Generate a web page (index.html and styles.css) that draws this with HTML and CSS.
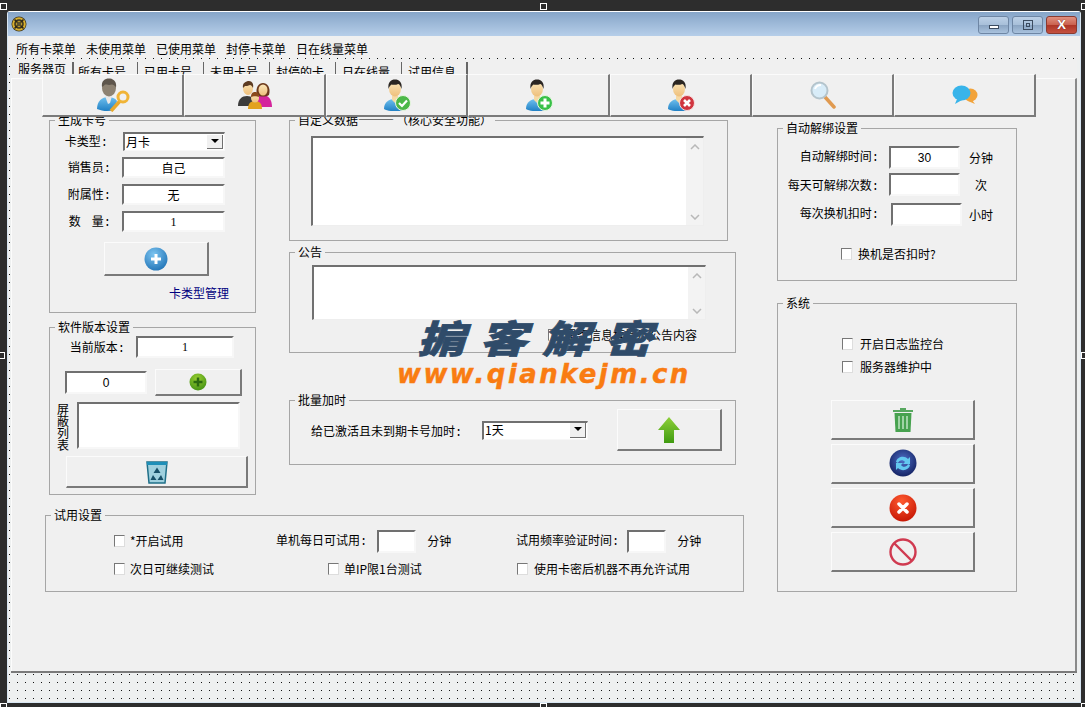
FILE: index.html
```html
<!DOCTYPE html>
<html lang="zh-CN">
<head>
<meta charset="utf-8">
<title>服务器页</title>
<link rel="stylesheet" href="styles.css">
</head>
<body>
<svg class="defs" width="0" height="0">
  <defs>
    <linearGradient id="gBlue" x1="0" y1="0" x2="0" y2="1"><stop offset="0" stop-color="#6fc0ee"/><stop offset="1" stop-color="#1f7fc4"/></linearGradient>
    <linearGradient id="gSkin" x1="0" y1="0" x2="0" y2="1"><stop offset="0" stop-color="#fbe6b8"/><stop offset="1" stop-color="#eebf7c"/></linearGradient>
    <radialGradient id="gBall" cx=".4" cy=".3" r=".8"><stop offset="0" stop-color="#7cc4f0"/><stop offset="1" stop-color="#1c6fb3"/></radialGradient>
    <radialGradient id="gGreen" cx=".45" cy=".3" r=".8"><stop offset="0" stop-color="#9ad030"/><stop offset="1" stop-color="#3a8a12"/></radialGradient>
    <radialGradient id="gRed" cx=".45" cy=".25" r=".85"><stop offset="0" stop-color="#ff5a30"/><stop offset="1" stop-color="#c01000"/></radialGradient>
    <radialGradient id="gNavy" cx=".5" cy=".4" r=".65"><stop offset="0" stop-color="#4f6fc8"/><stop offset="1" stop-color="#101d5c"/></radialGradient>
    <linearGradient id="gArrow" x1="0" y1="0" x2="0" y2="1"><stop offset="0" stop-color="#8ed03a"/><stop offset="1" stop-color="#3f9a10"/></linearGradient>
    <symbol id="person" viewBox="0 0 28 34">
      <path d="M1 30c0-7 5-10 11-10s11 3 11 10c-5 3-17 3-22 0z" fill="url(#gBlue)"/>
      <path d="M9 17h6v4l-3 3-3-3z" fill="#f6d9a4"/>
      <ellipse cx="12" cy="10" rx="6" ry="7.500" fill="url(#gSkin)"/>
      <path d="M5.500 10C4.500 3 8 .5 12 .5s7.500 2.500 6.500 9.500c-1-3-2-4.500-3-5-2 1-6 1-7 .5-1 1-2.500 2-3 4.500z" fill="#2b2622"/>
    </symbol>
  </defs>
</svg>
<div class="desk">
  <div class="window">
    <header class="titlebar">
      <svg class="app-icon" viewBox="0 0 16 16" width="16" height="16">
        <circle cx="8" cy="8" r="7.500" fill="#3a3320"/>
        <circle cx="8" cy="8" r="5.800" fill="none" stroke="#d8b030" stroke-width="2"/>
        <circle cx="8" cy="8" r="2.800" fill="#5c5230" stroke="#c8a428"/>
        <path d="M3.500 3.500l3 3M12.500 3.500l-3 3M3.500 12.500l3-3M12.500 12.500l-3-3" stroke="#2c2616" stroke-width="1.500"/>
      </svg>
      <div class="win-buttons">
        <div class="win-btn"><span class="glyph-min"></span></div>
        <div class="win-btn"><span class="glyph-max"></span></div>
        <div class="win-btn win-close"><span class="glyph-close">X</span></div>
      </div>
    </header>
    <div class="designer">
      <nav class="menu">
        <span>所有卡菜单</span><span>未使用菜单</span><span>已使用菜单</span><span>封停卡菜单</span><span>日在线量菜单</span>
      </nav>
      <div class="client">
        <div class="tabs">
          <span class="tab tab-on">服务器页</span><span class="tab">所有卡号</span><span class="tab">已用卡号</span><span class="tab">未用卡号</span><span class="tab">封停的卡</span><span class="tab">日在线量</span><span class="tab">试用信息</span>
        </div>
        <div class="toolbar">
          <div class="btn tool">
            <svg viewBox="0 0 34 34" width="34" height="34">
              <path d="M1 31c0-8 5-12 11-12 4 0 7 1 9 4l-3 9c-6 2-12 1-17-1z" fill="url(#gBlue)"/>
              <path d="M9 18h7l-2 7-2 1z" fill="#e8e8e8"/>
              <ellipse cx="13" cy="10" rx="7" ry="8.500" fill="#8d8272"/>
              <path d="M6 9C5 2 10 0 14 .5s7 4 6 9c-1-2-3-3-4-3-3 1-6 0-7 0-1 1-2 2-3 2.500z" fill="#5e564c"/>
              <path d="M15 33l9-10" stroke="#e9a92c" stroke-width="3.500"/>
              <circle cx="27" cy="19" r="5" fill="none" stroke="#f0b437" stroke-width="3"/>
            </svg>
          </div>
          <div class="btn tool">
            <svg viewBox="0 0 34 28" width="34" height="28">
              <path d="M0 25c0-7 4-10 9-10s8 3 8 10z" fill="#3c3c3c"/>
              <ellipse cx="10" cy="7.500" rx="5" ry="6.500" fill="url(#gSkin)"/>
              <path d="M5 7C4 2 8 0 11 0s5 3 4 7c-1-2-2-3-3-3-2 1-4 1-5 1z" fill="#5d3b22"/>
              <path d="M17 26c0-8 3-12 8-12s9 4 9 12z" fill="#d4259c"/>
              <path d="M19 14c-2-8 2-12 6-12s8 4 6 12c-3 2-9 2-12 0z" fill="#6d3a1c"/>
              <ellipse cx="25" cy="9" rx="4.500" ry="5.500" fill="url(#gSkin)"/>
              <path d="M10 28c0-6 3-8 7-8s7 2 7 8z" fill="#e2a21e"/>
              <ellipse cx="17" cy="17" rx="4" ry="4.500" fill="url(#gSkin)"/>
              <path d="M13 16c0-4 2-5 4-5s4 1 4 5c-2-1-6-1-8 0z" fill="#8a4a1c"/>
            </svg>
          </div>
          <div class="btn tool">
            <svg viewBox="0 0 28 32" width="28" height="32">
              <use href="#person" width="28" height="34"/>
              <circle cx="20" cy="24" r="7.500" fill="#4cb848" stroke="#e8f5e0"/>
              <path d="M16 24l3 3 5-5.500" fill="none" stroke="#fff" stroke-width="2.200"/>
            </svg>
          </div>
          <div class="btn tool">
            <svg viewBox="0 0 28 32" width="28" height="32">
              <use href="#person" width="28" height="34"/>
              <circle cx="20" cy="24" r="7.500" fill="#38c048" stroke="#e8f5e0"/>
              <path d="M20 19.500v9M15.500 24h9" stroke="#fff" stroke-width="3"/>
            </svg>
          </div>
          <div class="btn tool">
            <svg viewBox="0 0 28 32" width="28" height="32">
              <use href="#person" width="28" height="34"/>
              <circle cx="20" cy="24" r="7.500" fill="#d0353f" stroke="#f5dddd"/>
              <path d="M17 21l6 6M23 21l-6 6" stroke="#fff" stroke-width="2.600"/>
            </svg>
          </div>
          <div class="btn tool">
            <svg viewBox="0 0 26 28" width="26" height="28">
              <path d="M15 16l9 10" stroke="#e09a50" stroke-width="3.500" stroke-linecap="round"/>
              <circle cx="9.500" cy="9.500" r="8" fill="#d8ecf8" stroke="#b4c4cc" stroke-width="2"/>
              <path d="M5 8c1-3 3-4 6-4" fill="none" stroke="#fff" stroke-width="2"/>
            </svg>
          </div>
          <div class="btn tool">
            <svg viewBox="0 0 26 20" width="26" height="20">
              <ellipse cx="18.500" cy="10" rx="7" ry="6.500" fill="#f2a33a"/>
              <path d="M20 15l3 4-7-3z" fill="#f2a33a"/>
              <ellipse cx="9.500" cy="8" rx="9" ry="7.500" fill="#38b4ea"/>
              <path d="M5 14l-2 5 7-4z" fill="#38b4ea"/>
            </svg>
          </div>
        </div>
        <div class="page">
          <div class="main-area">
            <div class="upper">
              <div class="col-left">
                <fieldset class="group group-card">
                  <legend>生成卡号</legend>
                  <div class="row row-card-first">
                    <span class="lbl lbl-card-first">卡类型:</span>
                    <div class="combo combo-card"><span class="combo-text">月卡</span><span class="combo-arrow"></span></div>
                  </div>
                  <div class="row row-card">
                    <span class="lbl lbl-card">销售员:</span><div class="field field-card">自己</div>
                  </div>
                  <div class="row row-card">
                    <span class="lbl lbl-card">附属性:</span><div class="field field-card">无</div>
                  </div>
                  <div class="row row-card">
                    <span class="lbl lbl-card">数<span class="char-gap"></span>量:</span><div class="field field-card num-serif">1</div>
                  </div>
                  <div class="btn btn-add">
                    <svg viewBox="0 0 24 24" width="24" height="24">
                      <circle cx="12" cy="12" r="11.500" fill="url(#gBall)"/>
                      <path d="M12 7v10M7 12h10" stroke="#fff" stroke-width="3"/>
                    </svg>
                  </div>
                  <a class="link-manage">卡类型管理</a>
                </fieldset>
                <fieldset class="group group-version">
                  <legend>软件版本设置</legend>
                  <div class="row row-ver">
                    <span class="lbl lbl-ver">当前版本:</span><div class="field field-ver num-serif">1</div>
                  </div>
                  <div class="row row-ver2">
                    <div class="field field-zero">0</div>
                    <div class="btn btn-green">
                      <svg viewBox="0 0 18 18" width="18" height="18">
                        <circle cx="9" cy="9" r="8.500" fill="url(#gGreen)"/>
                        <path d="M9 4.500v9M4.500 9h9" stroke="#2c6a10" stroke-width="2.500"/>
                      </svg>
                    </div>
                  </div>
                  <div class="row row-block">
                    <span class="vlabel">屏蔽列表</span>
                    <div class="field field-block"></div>
                  </div>
                  <div class="btn btn-recycle">
                    <svg viewBox="0 0 22 24" width="22" height="24">
                      <path d="M1 2h20l-2 21H3z" fill="#9fd0de" stroke="#1f6f88" stroke-width="1.500"/>
                      <path d="M1 2h20v3H1z" fill="#1e8fb8"/>
                      <path d="M11 7.500l3.500 5.500h-7zM4.500 20l2.500-5 3.500 5zM17.500 20l-2.500-5-3.500 5z" fill="#174f68"/>
                    </svg>
                  </div>
                </fieldset>
              </div>
              <div class="col-mid">
                <fieldset class="group group-custom">
                  <legend>自定义数据<span class="dash">———</span>（核心安全功能）</legend>
                  <div class="memo memo-custom">
                    <div class="memo-scroll">
                      <svg viewBox="0 0 10 6" width="10" height="6"><path d="M1 5l4-4 4 4" fill="none" stroke="#b8b8b8" stroke-width="1.500"/></svg>
                      <svg viewBox="0 0 10 6" width="10" height="6"><path d="M1 1l4 4 4-4" fill="none" stroke="#b8b8b8" stroke-width="1.500"/></svg>
                    </div>
                  </div>
                </fieldset>
                <fieldset class="group group-notice">
                  <legend>公告</legend>
                  <div class="memo memo-notice">
                    <div class="memo-scroll">
                      <svg viewBox="0 0 10 6" width="10" height="6"><path d="M1 5l4-4 4 4" fill="none" stroke="#b8b8b8" stroke-width="1.500"/></svg>
                      <svg viewBox="0 0 10 6" width="10" height="6"><path d="M1 1l4 4 4-4" fill="none" stroke="#b8b8b8" stroke-width="1.500"/></svg>
                    </div>
                  </div>
                  <label class="check check-notice"><span class="box"></span>是否信息框提示公告内容</label>
                </fieldset>
                <fieldset class="group group-batch">
                  <legend>批量加时</legend>
                  <div class="row row-batch">
                    <span class="lbl-batch">给已激活且未到期卡号加时:</span>
                    <div class="combo combo-batch"><span class="combo-text">1天</span><span class="combo-arrow"></span></div>
                    <div class="btn btn-up">
                      <svg viewBox="0 0 24 28" width="24" height="28">
                        <path d="M12 1l11 13h-6v13H7V14H1z" fill="url(#gArrow)"/>
                      </svg>
                    </div>
                  </div>
                </fieldset>
              </div>
            </div>
            <fieldset class="group group-trial">
              <legend>试用设置</legend>
              <div class="trial-grid">
                <label class="check check-trial"><span class="box"></span>*开启试用</label>
                <div class="trial-cell"><span class="colon-text">单机每日可试用:</span><div class="field field-mini"></div><span>分钟</span></div>
                <div class="trial-cell trial-cell-b"><span class="colon-text">试用频率验证时间:</span><div class="field field-mini"></div><span>分钟</span></div>
                <label class="check check-trial"><span class="box"></span>次日可继续测试</label>
                <label class="check check-trial check-ip"><span class="box"></span>单IP限1台测试</label>
                <label class="check check-once"><span class="box"></span>使用卡密后机器不再允许试用</label>
              </div>
            </fieldset>
          </div>
          <div class="col-right">
            <fieldset class="group group-unbind">
              <legend>自动解绑设置</legend>
              <div class="row row-unbind row-unbind-1">
                <span class="lbl lbl-unbind">自动解绑时间:</span><div class="field field-unbind">30</div><span class="unit">分钟</span>
              </div>
              <div class="row row-unbind">
                <span class="lbl lbl-unbind lbl-unbind-low">每天可解绑次数:</span><div class="field field-unbind"></div><span class="unit">次</span>
              </div>
              <div class="row row-unbind row-unbind-3">
                <span class="lbl lbl-unbind">每次换机扣时:</span><div class="field field-unbind field-shift"></div><span class="unit">小时</span>
              </div>
              <label class="check check-swap"><span class="box"></span>换机是否扣时?</label>
            </fieldset>
            <fieldset class="group group-system">
              <legend>系统</legend>
              <label class="check check-sys check-sys-1"><span class="box"></span>开启日志监控台</label>
              <label class="check check-sys check-sys-2"><span class="box"></span>服务器维护中</label>
              <div class="sys-buttons">
                <div class="btn btn-sys">
                  <svg viewBox="0 0 22 28" width="22" height="28">
                    <path d="M1 4h20v2H1z" fill="#58a860"/><path d="M8 2h6v2H8z" fill="#58a860"/>
                    <path d="M2.500 7h17l-1 19h-15z" fill="#47a24f"/>
                    <path d="M7 10v13M11 10v13M15 10v13" stroke="#bfe3c2" stroke-width="1.500"/>
                  </svg>
                </div>
                <div class="btn btn-sys">
                  <svg viewBox="0 0 28 30" width="28" height="30">
                    <circle cx="14" cy="14" r="13.500" fill="url(#gNavy)"/>
                    <path d="M7 13c1-5 8-7 12-3l2-2v7h-7l2-2c-2-3-6-2-7 1z" fill="#63c8f0"/>
                    <path d="M21 16c-1 5-8 7-12 3l-2 2v-7h7l-2 2c2 3 6 2 7-1z" fill="#63c8f0"/>
                  </svg>
                </div>
                <div class="btn btn-sys">
                  <svg viewBox="0 0 28 30" width="28" height="30">
                    <circle cx="14" cy="15" r="13.500" fill="url(#gRed)"/>
                    <path d="M10 11l8 8M18 11l-8 8" stroke="#fff" stroke-width="3.500" stroke-linecap="round"/>
                  </svg>
                </div>
                <div class="btn btn-sys">
                  <svg viewBox="0 0 28 28" width="28" height="28">
                    <circle cx="14" cy="14" r="12.500" fill="none" stroke="#d03a50" stroke-width="2.400"/>
                    <path d="M5.500 5.500l17 17" stroke="#d03a50" stroke-width="2.400"/>
                  </svg>
                </div>
              </div>
            </fieldset>
          </div>
        </div>
      </div>
    </div>
  </div>
  <div class="watermark">
    <div class="wm-cn">掮客解密</div>
    <div class="wm-en">www.qiankejm.cn</div>
  </div>
  <span class="handle h-tl"></span><span class="handle h-tc"></span><span class="handle h-tr"></span>
  <span class="handle h-ml"></span><span class="handle h-mr"></span>
  <span class="handle h-bl"></span><span class="handle h-bc"></span><span class="handle h-br"></span>
</div>
</body>
</html>
```
FILE: styles.css
```css
* { box-sizing: border-box; }
html, body { margin: 0; padding: 0; }
body {
  width: 1085px;
  height: 707px;
  overflow: hidden;
  font: 12px/14px "Noto Sans CJK SC", "Liberation Sans", sans-serif;
  color: #000;
  background: #2d2d2d;
}
.defs { position: absolute; }
.desk {
  position: relative;
  width: 1085px;
  height: 707px;
  padding: 11px 4px 4px 7px;
}
.window {
  display: flex;
  flex-direction: column;
  height: 692px;
  border: 1px solid #d8e6f2;
  border-top-color: #fff;
  border-radius: 3px 3px 0 0;
  background: #eef0f0;
}
.titlebar {
  display: flex;
  align-items: center;
  justify-content: space-between;
  flex: none;
  height: 24px;
  padding: 0 3px 0 3px;
  background: linear-gradient(#86a5c8, #b6cee9);
}
.app-icon { flex: none; }
.win-buttons { display: flex; gap: 3px; margin-top: 1px; }
.win-btn {
  display: flex;
  align-items: center;
  justify-content: center;
  width: 31px;
  height: 18px;
  border: 1px solid #6e86a4;
  border-radius: 3px;
  background: linear-gradient(#bcd0e6 0, #a7bfd9 50%, #8aa4c2 51%, #a9c2dd 100%);
}
.win-close {
  border-color: #8a3a30;
  background: linear-gradient(#e0907f 0, #c9604e 50%, #ad3526 51%, #c45140 100%);
}
.glyph-min { width: 10px; height: 4px; border: 1px solid #3c4c60; background: #fff; margin-top: 4px; }
.glyph-max { width: 10px; height: 10px; border: 1px solid #3c4c60; position: relative; }
.glyph-max::after { content: ""; position: absolute; inset: 2px; border: 1px solid #3c4c60; }
.glyph-close { font: bold 13px/14px "Liberation Sans", sans-serif; color: #fff; text-shadow: 0 0 1px #5a1a10; }

.designer {
  flex: 1;
  display: flex;
  flex-direction: column;
  background-color: #eef0f0;
  background-image: conic-gradient(at 1px 1px, transparent 75%, #111 0);
  background-size: 8px 8px;
  background-position: 1px 6px;
}
.menu {
  flex: none;
  display: flex;
  gap: 10px;
  height: 22px;
  padding: 6px 0 0 8px;
  background: #f0f0f0;
}
.client {
  flex: none;
  display: flex;
  flex-direction: column;
  height: 614px;
  margin: 1px 3px 0 3px;
  background: #f0f0f0;
  border-bottom: 2px solid #7a7a7a;
}
.tabs {
  flex: none;
  display: flex;
  height: 15px;
  overflow: hidden;
}
.tab {
  flex: none;
  width: 66px;
  margin-top: 3px;
  padding: 3px 0 0 6px;
  border-right: 1px solid #666;
  white-space: nowrap;
}
.tab:nth-child(2) { width: 64px; padding-left: 4px; }
.tab-on { width: 63px; padding: 0 0 0 7px; border-right-width: 2px; }
.tab:last-child { border-right-width: 2px; }

.btn {
  display: flex;
  align-items: center;
  justify-content: center;
  background: #f0f0f0;
  border-top: 1px solid #fbfbfb;
  border-left: 1px solid #fbfbfb;
  border-right: 2px solid #7a7a7a;
  border-bottom: 2px solid #7a7a7a;
}
.toolbar {
  position: relative;
  z-index: 1;
  flex: none;
  display: flex;
  height: 43px;
  width: 995px;
  margin: 0 0 -39px 31px;
}
.tool { width: 142px; height: 43px; }

.page {
  flex: 1;
  display: flex;
  padding: 34px 0 0 33px;
  border-top: 1px solid #fcfcfc;
  border-right: 2px solid #8a8a8a;
  border-left: 1px solid #fcfcfc;
}
.main-area { flex: none; width: 699px; }
.upper { display: flex; padding-left: 4px; }
.col-left { flex: none; width: 207px; display: flex; flex-direction: column; gap: 7px; }
.col-mid { flex: none; width: 447px; margin-left: 33px; display: flex; flex-direction: column; }
.col-right { flex: none; width: 240px; margin: 8px 0 0 33px; display: flex; flex-direction: column; }

.group {
  margin: 0;
  padding: 0;
  min-width: 0;
  border: 1px solid #a6a6a6;
  display: flow-root;
}
.group legend {
  margin-left: 5px;
  padding: 0 3px;
  height: 14px;
  line-height: 14px;
  white-space: nowrap;
}
.dash { letter-spacing: 2px; }
.group-card { height: 200px; }
.group-version { height: 175px; }
.group-custom { width: 439px; height: 128px; }
.group-notice { height: 108px; margin-top: 4px; }
.group-batch { height: 72px; margin-top: 40px; }
.group-trial { height: 84px; margin-top: 13px; }
.group-unbind { height: 160px; }
.group-system { height: 296px; margin-top: 15px; }

.row { display: flex; align-items: center; }
.lbl, .lbl-batch, .colon-text {
  flex: none;
  white-space: nowrap;
  font-family: "Liberation Mono", "Noto Sans CJK SC", monospace;
}
.lbl { text-align: right; padding-top: 2px; }
.char-gap { display: inline-block; width: 11px; }

.field {
  display: flex;
  align-items: center;
  justify-content: center;
  flex: none;
  background: #fff;
  border-top: 2px solid #707070;
  border-left: 2px solid #707070;
  border-right: 2px solid #f7f7f7;
  border-bottom: 2px solid #f7f7f7;
}
.num-serif { font-family: "Liberation Serif", serif; }

.combo {
  display: flex;
  align-items: center;
  justify-content: space-between;
  flex: none;
  background: #fff;
  border-top: 2px solid #707070;
  border-left: 2px solid #707070;
  border-right: 1px solid #f7f7f7;
  border-bottom: 1px solid #f7f7f7;
}
.combo-text { padding-left: 1px; }
.combo-arrow {
  position: relative;
  flex: none;
  width: 16px;
  height: 14px;
  margin-right: 1px;
  background: #f0f0f0;
  border-right: 1px solid #707070;
  border-bottom: 1px solid #707070;
}
.combo-arrow::after {
  content: "";
  position: absolute;
  left: 4px;
  top: 4px;
  border: 4px solid transparent;
  border-top: 4px solid #000;
  border-bottom: 0;
}

.row-card-first { margin-top: 5px; }
.row-card { margin-top: 6px; }
.lbl-card-first { width: 58px; }
.lbl-card { width: 61px; }
.combo-card { width: 102px; height: 19px; margin-left: 15px; }
.field-card { width: 103px; height: 21px; margin-left: 11px; }
.btn-add { width: 105px; height: 34px; margin: 10px 0 0 54px; }
.link-manage { display: block; margin: 10px 0 0 119px; color: #000080; white-space: nowrap; }

.row-ver { margin-top: 2px; }
.lbl-ver { width: 75px; padding-top: 4px; }
.field-ver { width: 98px; height: 22px; margin-left: 11px; }
.row-ver2 { margin-top: 11px; padding-left: 15px; gap: 8px; }
.field-zero { width: 82px; height: 23px; font-family: "Liberation Sans", sans-serif; }
.btn-green { width: 87px; height: 27px; }
.row-block { margin-top: 6px; padding-left: 7px; align-items: flex-start; }
.vlabel { flex: none; width: 12px; line-height: 12px; margin-top: 1px; }
.field-block { width: 163px; height: 47px; margin-left: 8px; }
.btn-recycle { width: 182px; height: 32px; margin: 5px 0 0 16px; }

.memo {
  display: flex;
  justify-content: flex-end;
  background: #fff;
  border-top: 2px solid #707070;
  border-left: 2px solid #707070;
  border-right: 1px solid #eee;
  border-bottom: 1px solid #eee;
}
.memo-scroll {
  display: flex;
  flex-direction: column;
  align-items: center;
  justify-content: space-between;
  width: 17px;
  padding: 6px 0 5px;
  background: #f3f3f3;
}
.memo-custom { width: 393px; height: 90px; margin: 9px 0 0 21px; }
.memo-notice { width: 394px; height: 55px; margin: 6px 0 0 22px; }
.check { display: flex; align-items: center; white-space: nowrap; }
.box {
  flex: none;
  width: 11px;
  height: 12px;
  margin-right: 6px;
  background: #fff;
  border-top: 1px solid #777;
  border-left: 1px solid #777;
  border-right: 1px solid #ddd;
  border-bottom: 1px solid #ddd;
}
.check-notice { margin: 8px 0 0 258px; }
.check-trial .box { margin-right: 5px; }
.check-once { margin-left: 1px; }

.row-batch { margin-top: 2px; padding-left: 21px; }
.lbl-batch { width: 171px; padding-top: 6px; }
.combo-batch { width: 106px; height: 19px; }
.combo-batch .combo-text { margin-top: -1px; }
.combo-batch .combo-arrow { width: 16px; height: 15px; }
.btn-up { width: 105px; height: 42px; margin-left: 29px; }

.trial-grid {
  display: grid;
  grid-template-columns: 162px 240px auto;
  grid-template-rows: 24px 24px;
  row-gap: 4px;
  padding: 7px 0 0 68px;
  align-items: center;
}
.trial-cell { display: flex; align-items: center; white-space: nowrap; }
.colon-text { padding-top: 2px; }
.trial-cell .field-mini { margin: 0 11px 0 10px; }
.trial-cell-b .field-mini { margin: 0 11px 0 8px; }
.field-mini { width: 39px; height: 23px; }
.check-ip { margin-left: 52px; }

.row-unbind { margin-top: 4px; height: 23px; }
.row-unbind-1 { margin-top: 11px; }
.row-unbind-3 { margin-top: 7px; }
.lbl-unbind { width: 101px; padding-top: 0; }
.lbl-unbind-low { padding-top: 4px; }
.field-unbind { width: 71px; height: 23px; margin-left: 10px; font-family: "Liberation Sans", sans-serif; }
.field-shift { margin-left: 12px; margin-right: -2px; }
.unit { flex: none; width: 42px; text-align: center; }
.check-swap { margin: 21px 0 0 63px; }

.check-sys { margin-left: 64px; height: 16px; }
.check-sys .box { margin-right: 7px; }
.check-sys-1 { margin-top: 26px; }
.check-sys-2 { margin-top: 7px; }
.sys-buttons { display: flex; flex-direction: column; gap: 4px; margin: 25px 0 0 53px; }
.btn-sys { width: 144px; height: 40px; }

.watermark {
  position: absolute;
  left: 397px;
  top: 316px;
  pointer-events: none;
}
.wm-cn {
  margin-left: 20px;
  font: italic 900 38px/42px "Noto Sans CJK SC", sans-serif;
  letter-spacing: 12px;
  color: #2f4b69;
  white-space: nowrap;
  -webkit-text-stroke: .7px #2f4b69;
  transform: scaleX(1.25);
  transform-origin: left center;
}
.wm-en {
  margin-top: 2px;
  font: italic bold 26px/28px "DejaVu Sans", sans-serif;
  letter-spacing: 2.400px;
  color: #f97c12;
  white-space: nowrap;
  -webkit-text-stroke: .4px #f97c12;
}

.handle {
  position: absolute;
  width: 7px;
  height: 7px;
  background: #2d2d2d;
  border: 1px solid #fff;
}
.h-tl { left: 0; top: 3px; }
.h-tc { left: 540px; top: 3px; }
.h-tr { left: 1081px; top: 3px; }
.h-ml { left: -2px; top: 352px; }
.h-mr { left: 1081px; top: 352px; }
.h-bl { left: 0; top: 703px; }
.h-bc { left: 540px; top: 703px; }
.h-br { left: 1081px; top: 703px; }
```
